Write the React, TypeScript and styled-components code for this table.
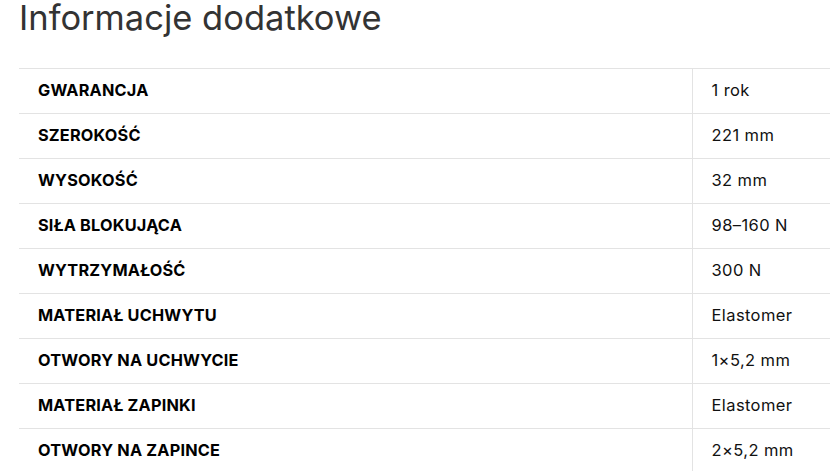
import styled, { createGlobalStyle } from "styled-components";

const rows: [string, string][] = [
  ["GWARANCJA", "1 rok"],
  ["SZEROKOŚĆ", "221 mm"],
  ["WYSOKOŚĆ", "32 mm"],
  ["SIŁA BLOKUJĄCA", "98–160 N"],
  ["WYTRZYMAŁOŚĆ", "300 N"],
  ["MATERIAŁ UCHWYTU", "Elastomer"],
  ["OTWORY NA UCHWYCIE", "1×5,2 mm"],
  ["MATERIAŁ ZAPINKI", "Elastomer"],
  ["OTWORY NA ZAPINCE", "2×5,2 mm"],
];

const App = () => {
  return (
    <>
      <GlobalStyle />
      <Section>
        <Title>Informacje dodatkowe</Title>
        <Table>
          <tbody>
            {rows.map(([label, value]) => (
              <Row key={label}>
                <Label>{label}</Label>
                <Value>{value}</Value>
              </Row>
            ))}
          </tbody>
        </Table>
      </Section>
    </>
  );
};

export default App;

const GlobalStyle = createGlobalStyle`
  body {
    margin: 0;
    background: #fff;
    font-family: Inter, "Liberation Sans", sans-serif;
    overflow: hidden;
  }
`;
const Section = styled.section`
  padding-left: 19px;
`;
const Title = styled.h2`
  margin: 0;
  height: 68px;
  font-size: 34.5px;
  line-height: 36px;
  font-weight: 400;
  color: #333;
`;
const Table = styled.table`
  width: 811px;
  border-collapse: collapse;
  border-top: 1px solid #e3e3e3;
`;
const Row = styled.tr`
  height: 45px;
  border-bottom: 1px solid #e3e3e3;
`;
const Label = styled.td`
  width: 673px;
  box-sizing: border-box;
  padding: 0 0 2px 19px;
  border-right: 1px solid #e3e3e3;
  font-size: 16.3px;
  font-weight: 700;
  letter-spacing: 0.2px;
  color: #000;
`;
const Value = styled.td`
  padding: 0 0 2px 19px;
  font-size: 16.5px;
  letter-spacing: 0.4px;
  color: #111;
`;
